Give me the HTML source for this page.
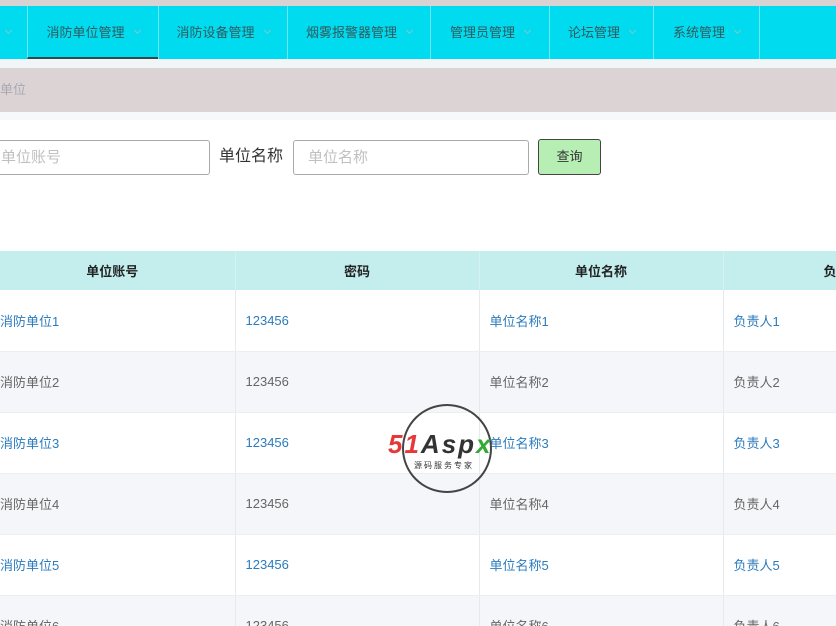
<!DOCTYPE html>
<html><head><meta charset="utf-8"><style>
*{margin:0;padding:0;box-sizing:border-box}
html,body{width:836px;height:626px;overflow:hidden}
body{background:#fff;font-family:"Liberation Sans","Noto Sans CJK SC",sans-serif;position:relative}
.top{position:absolute;left:0;top:0;width:836px;height:6px;background:#d8d2d2}
.nav{position:absolute;left:0;top:6px;width:836px;height:53px;background:#00dbef}
.ni{position:absolute;top:0;height:53px;border-left:1px solid #6ee6f2;font-size:13px;color:#2f5a5e;line-height:54px;text-align:center}
.ni .c{display:inline-block;width:5px;height:5px;border-right:1px solid #7cc;border-bottom:1px solid #7cc;transform:rotate(45deg);margin-left:10px;vertical-align:4px}
.act{border-bottom:2px solid #2b4a50}
.gap{position:absolute;top:59px;left:0;width:836px;height:9px;background:#f2f5f8}
.bc{position:absolute;top:68px;left:0;width:836px;height:44px;background:#dcd4d4;font-size:13px;color:#a8a8b4;line-height:44px}
.gap2{position:absolute;top:112px;left:0;width:836px;height:8px;background:#f6f8fa}
.inp{position:absolute;height:35px;border:1px solid #aaa;border-radius:3px;background:#fff;font-size:15px;color:#c0c0c0;line-height:33px;padding-left:14px}
.lbl{position:absolute;left:219px;top:146px;font-size:16px;color:#333;line-height:22px}
.btn{position:absolute;left:538px;top:139px;width:63px;height:36px;background:#b6eeb4;border:1px solid #444;border-radius:3px;font-size:13px;color:#333;text-align:center;line-height:34px}
table{position:absolute;left:-10px;top:251px;border-collapse:collapse;table-layout:fixed;width:977px}
td,th{border-right:1px solid #e6eaee;height:61px;font-size:13px;padding-left:10px;text-align:left;font-weight:normal}
th{height:39px;background:#c4eeee;font-weight:bold;color:#222;text-align:center;padding:0;border-right:1px solid #d4f2f2}
tr.a td{background:#fff;color:#2b7bbd}
tr.b td{background:#f5f6f9;color:#666}
td{border-bottom:1px solid #eceef0}
.logo{position:absolute;left:402px;top:404px;width:90px;height:89px;border:2px solid #444;border-radius:50%}
</style></head><body>
<div class="top"></div>
<div class="nav">
<div class="ni" style="left:-20px;width:47px;border-left:none"><span class="c"></span></div>
<div class="ni act" style="left:27px;width:131px">消防单位管理<span class="c"></span></div>
<div class="ni" style="left:158px;width:129px">消防设备管理<span class="c"></span></div>
<div class="ni" style="left:287px;width:143px">烟雾报警器管理<span class="c"></span></div>
<div class="ni" style="left:430px;width:119px">管理员管理<span class="c"></span></div>
<div class="ni" style="left:549px;width:104px">论坛管理<span class="c"></span></div>
<div class="ni" style="left:653px;width:106px">系统管理<span class="c"></span></div>
<div class="ni" style="left:759px;width:80px"></div>
</div>
<div class="gap"></div>
<div class="bc">单位</div>
<div class="gap2"></div>
<div class="inp" style="left:-20px;top:140px;width:230px;padding-left:20px">单位账号</div>
<div class="lbl">单位名称</div>
<div class="inp" style="left:293px;top:140px;width:236px">单位名称</div>
<div class="btn">查询</div>
<table>
<colgroup><col style="width:245px"><col style="width:244px"><col style="width:244px"><col style="width:244px"></colgroup>
<tr><th>单位账号</th><th>密码</th><th>单位名称</th><th style="text-align:left;padding-left:100px">负责人</th></tr>
<tr class="a"><td>消防单位1</td><td>123456</td><td>单位名称1</td><td>负责人1</td></tr>
<tr class="b"><td>消防单位2</td><td>123456</td><td>单位名称2</td><td>负责人2</td></tr>
<tr class="a"><td>消防单位3</td><td>123456</td><td>单位名称3</td><td>负责人3</td></tr>
<tr class="b"><td>消防单位4</td><td>123456</td><td>单位名称4</td><td>负责人4</td></tr>
<tr class="a"><td>消防单位5</td><td>123456</td><td>单位名称5</td><td>负责人5</td></tr>
<tr class="b"><td>消防单位6</td><td>123456</td><td>单位名称6</td><td>负责人6</td></tr>
</table>
<div class="logo"></div>
<div style="position:absolute;left:388px;top:430px;font-size:26px;font-weight:bold;font-style:italic;letter-spacing:2px;line-height:28px"><span style="color:#e53838">51</span><span style="color:#333">Asp</span><span style="color:#3a3">x</span></div>
<div style="position:absolute;left:414px;top:460px;font-size:8px;color:#333;letter-spacing:2px">源码服务专家</div>
</body></html>
